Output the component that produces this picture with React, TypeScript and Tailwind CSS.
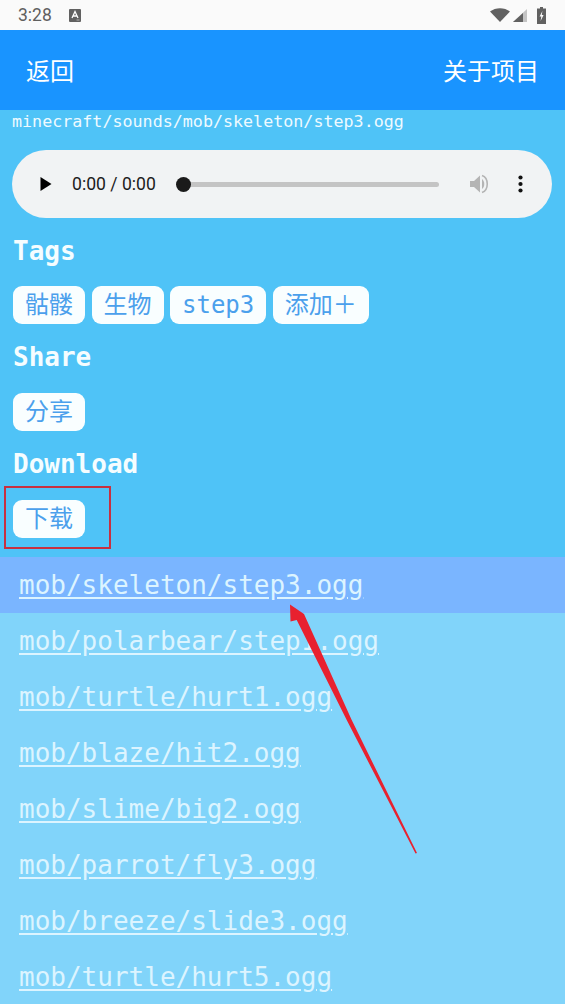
const MONO = "font-['DejaVu_Sans_Mono','Noto_Sans_CJK_SC',monospace]";

const tags = ["骷髅", "生物", "step3", "添加＋"];

const files = [
  "mob/skeleton/step3.ogg",
  "mob/polarbear/step1.ogg",
  "mob/turtle/hurt1.ogg",
  "mob/blaze/hit2.ogg",
  "mob/slime/big2.ogg",
  "mob/parrot/fly3.ogg",
  "mob/breeze/slide3.ogg",
  "mob/turtle/hurt5.ogg",
];

function Chip({ label }: { label: string }) {
  return (
    <button className="h-[38px] rounded-[9px] bg-[#f9feff] px-3 text-[24px] leading-[36px] text-[#4ba0ec]">
      {label}
    </button>
  );
}

function Heading({ label }: { label: string }) {
  return <h2 className="text-[26px] leading-[36px] font-bold text-[#f5fdff]">{label}</h2>;
}

function StatusBar() {
  return (
    <div className="flex h-[30px] items-center justify-between bg-[#fafafa] pr-[19px] pl-[18px] font-['Roboto',sans-serif] text-[#5f5f5f]">
      <div className="flex items-center gap-[17px]">
        <span className="text-[17.5px]">3:28</span>
        <svg width="12" height="13" viewBox="0 0 12 13">
          <rect width="12" height="13" rx="1" fill="#616161" />
          <path d="M3 9 L6 2.5 L9 9 M4.2 7 H7.8" stroke="#fff" strokeWidth="1.3" fill="none" />
          <path d="M7.5 11 H10.5" stroke="#b0b0b0" strokeWidth="1" />
        </svg>
      </div>
      <div className="flex items-center">
        <svg width="20" height="14" viewBox="0 0 20 14">
          <path d="M0 3.5 C5.5 -1 14.5 -1 20 3.5 L10 14 Z" fill="#616161" />
        </svg>
        <svg width="14" height="13" viewBox="0 0 14 13" className="ml-[3px]">
          <path d="M14 0 V13 H0 Z" fill="#c4c4c4" />
          <path d="M10 4 V13 H0 Z" fill="#616161" />
        </svg>
        <svg width="9" height="17" viewBox="0 0 9 17" className="ml-[10px]">
          <path d="M3 0 H6 V1.5 H9 V17 H0 V1.5 H3 Z" fill="#616161" />
          <path d="M5.4 4 L2.6 9.5 H4.3 L3.6 14 L6.6 8 H4.8 Z" fill="#fafafa" />
        </svg>
      </div>
    </div>
  );
}

function AudioPlayer() {
  return (
    <div className="mx-3 flex h-[68px] w-[540px] items-center rounded-[34px] bg-[#f1f3f4] font-['Roboto',sans-serif]">
      <svg width="12" height="14" viewBox="0 0 12 14" className="ml-[28px]">
        <path d="M0.5 0 L11.5 7 L0.5 14 Z" fill="#000" />
      </svg>
      <span className="ml-[20px] w-[84px] text-[17.6px] whitespace-nowrap text-[#1c1c1c]">0:00 / 0:00</span>
      <div className="relative ml-[28px] h-[5px] w-[255px] rounded-full bg-[#c4c4c4]">
        <div className="absolute top-[-5px] left-[-8px] size-[15px] rounded-full bg-[#1a1a1a]" />
      </div>
      <svg width="20" height="20" viewBox="0 0 20 20" className="ml-[31px]">
        <path d="M0 7 H4 L10 1.5 V18.5 L4 13 H0 Z" fill="#b4b4b4" />
        <path d="M12 5 C15 7 15 13 12 15 Z" fill="#b4b4b4" />
        <path d="M12 1.5 C19 4 19 16 12 18.5" fill="none" stroke="#b4b4b4" strokeWidth="1.6" />
      </svg>
      <svg width="5" height="18" viewBox="0 0 5 18" className="ml-[28px]">
        <circle cx="2.5" cy="2.5" r="2.1" fill="#111" />
        <circle cx="2.5" cy="9" r="2.1" fill="#111" />
        <circle cx="2.5" cy="15.5" r="2.1" fill="#111" />
      </svg>
    </div>
  );
}

export default function App() {
  return (
    <div className="relative h-[1004px] w-[565px] overflow-hidden bg-[#81d4fa]">
      <StatusBar />
      <header className="flex h-[80px] items-center justify-between bg-[#1994ff] px-[26px] font-['Noto_Sans_CJK_SC',sans-serif] text-[24px] text-white">
        <span>返回</span>
        <span>关于项目</span>
      </header>

      <section className={`h-[447px] bg-[#4fc3f7] ${MONO}`}>
        <p className="pl-3 text-[16.7px] leading-[22px] text-[#eefaff]">
          minecraft/sounds/mob/skeleton/step3.ogg
        </p>
        <div className="pt-[18px]">
          <AudioPlayer />
        </div>
        <div className="mt-[15px] pl-[13px]">
          <Heading label="Tags" />
          <div className="mt-[17px] mb-[15px] flex gap-[6.5px]">
            {tags.map((t) => (
              <Chip key={t} label={t} />
            ))}
          </div>
          <Heading label="Share" />
          <div className="mt-[18px] mb-[15px] flex">
            <Chip label="分享" />
          </div>
          <Heading label="Download" />
          <div className="mt-[18px] flex">
            <Chip label="下载" />
          </div>
        </div>
      </section>

      <ul className={`text-[26px] ${MONO}`}>
        {files.map((f, i) => (
          <li
            key={f}
            className={`flex h-[56px] items-center pl-[19px] ${i === 0 ? "bg-[#7ab5ff]" : ""}`}
          >
            <a className="text-[#dcf4ff] underline underline-offset-[3px]">{f}</a>
          </li>
        ))}
      </ul>

      {/* screenshot annotations */}
      <div className="absolute top-[486px] left-[4px] h-[63px] w-[107px] border-2 border-[#c83040]" />
      <svg className="absolute top-0 left-0" width="565" height="1004" viewBox="0 0 565 1004">
        <path d="M290 604.5 L304 614 L351.7 720 L417 853 L415.5 853.5 L346.7 720 L296.7 620 L290.5 621.5 Z" fill="#e8212f" />
      </svg>
    </div>
  );
}
